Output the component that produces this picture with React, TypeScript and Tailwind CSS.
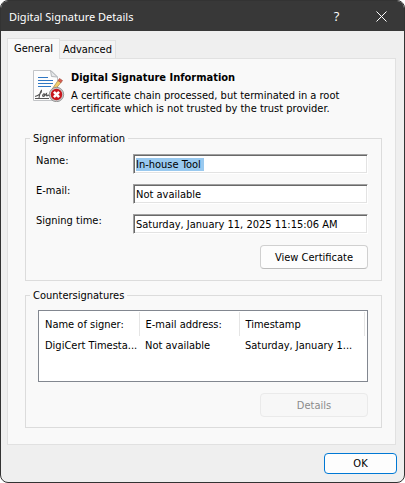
import { useEffect, useRef } from 'react';
import type { ReactNode, Ref } from 'react';

function SignatureIcon() {
  return (
    <svg className="h-8 w-8 shrink-0" viewBox="0 0 32 32" aria-hidden="true">
      <path d="M0.5 0.5H18L24.5 7V30.5H0.5Z" fill="#fdfdfd" stroke="#c2c4c7" />
      <path d="M17.5 0.5L18.500 6.500L24.5 7Z" fill="#e6e8ea" stroke="#b4b7ba" />
      <path d="M5 7.5H15M5 10.5H20M5 13.5H20M5 16.5H18" stroke="#2f77c4" />
      <path
        d="M2 26.500C6 25.500 9 22.500 8.500 20.500C7.500 21.500 6.500 25 6 28M9.500 26.500C9.500 24 11.500 23 11.500 24.500C11.500 26 10 26.500 10.500 26.500C12 26.500 12.500 24 13.500 23.500C13 26 14 26.500 15 25L17 26M2 28.500H16"
        fill="none"
        stroke="#555"
        strokeWidth="1.100"
      />
      <path d="M19.500 18.500L25 10.500L28 12.500L22.500 19Z" fill="#f1cd6b" stroke="#a8884a" strokeWidth="0.700" />
      <path d="M25 10.500L26.500 8.500L29.500 10.500L28 12.700Z" fill="#d9604f" stroke="#9d4a3f" strokeWidth="0.600" />
      <circle cx="23.500" cy="24.500" r="7.200" fill="#c9c9c9" stroke="#858585" strokeWidth="0.800" />
      <circle cx="23.500" cy="24.500" r="5.700" fill="#c8171d" />
      <path d="M20.900 21.900L26.100 27.100M26.100 21.900L20.900 27.100" stroke="#fff" strokeWidth="2.600" />
    </svg>
  );
}

function Group({ title, children }: { title: string; children: ReactNode }) {
  return (
    <fieldset className="min-w-0 border border-[#dcdcdc] pr-[13px] pb-2.5 pl-2.5">
      <legend className="-ml-1.5 px-[3px] leading-[13px]">{title}</legend>
      {children}
    </fieldset>
  );
}

type FieldProps = { id: string; label: string; value: string; inputRef?: Ref<HTMLInputElement> };

function Field({ id, label, value, inputRef }: FieldProps) {
  return (
    <div className="flex items-start">
      <label htmlFor={id} className="w-[97px] shrink-0">
        {label}
      </label>
      <input
        id={id}
        ref={inputRef}
        readOnly
        defaultValue={value}
        className="h-5 min-w-0 flex-1 border border-t-[#a0a0a0] border-r-white border-b-white border-l-[#a0a0a0] bg-white px-0.5 shadow-[inset_1px_1px_0_#696969,inset_-1px_-1px_0_#e3e3e3] outline-none selection:bg-[#99c9ef] selection:text-black"
      />
    </div>
  );
}

export default function App() {
  const nameRef = useRef<HTMLInputElement>(null);

  useEffect(() => {
    nameRef.current?.focus();
    nameRef.current?.select();
  }, []);

  return (
    <main className="flex min-h-screen flex-col overflow-hidden rounded-lg border border-[#333333] bg-[#efefef] font-['DejaVu_Sans_Condensed','DejaVu_Sans',sans-serif] text-[11px] leading-[13px] text-black">
      <header className="flex h-[30px] items-center bg-[#383838] pl-2 text-white">
        <h1 className="flex-1 font-['Noto_Sans',sans-serif]">Digital Signature Details</h1>
        <button type="button" aria-label="Help" className="flex h-full w-[45px] items-center justify-center font-['Open_Sans',sans-serif] text-[13px]">
          ?
        </button>
        <button type="button" aria-label="Close" className="flex h-full w-[45px] items-center justify-center">
          <svg className="h-[11px] w-[11px]" viewBox="0 0 11 11" fill="none" stroke="#fff" aria-hidden="true">
            <path d="M0.500 0.500L10.500 10.500M10.500 0.500L0.500 10.500" />
          </svg>
        </button>
      </header>

      <div className="pt-[7px] pr-2 pl-1.5">
        <div role="tablist" className="flex items-end">
          <button type="button" role="tab" aria-selected="true" className="relative -mb-px h-[21px] w-[53px] border border-b-0 border-[#e1e1e1] bg-[#f9f9f9] pb-0.5">
            General
          </button>
          <button type="button" role="tab" aria-selected="false" className="h-[18px] w-14 border border-b-0 border-l-0 border-[#e1e1e1] bg-[#f3f3f3]">
            Advanced
          </button>
        </div>

        <section role="tabpanel" className="border border-[#e1e1e1] bg-[#f9f9f9] pt-[11px] pr-[13px] pb-4 pl-[17px]">
          <div className="flex gap-1.5 pl-2">
            <SignatureIcon />
            <div className="pt-px">
              <h2 className="font-bold">Digital Signature Information</h2>
              <p className="mt-[5px]">
                A certificate chain processed, but terminated in a root
                <br />
                certificate which is not trusted by the trust provider.
              </p>
            </div>
          </div>

          <div className="mt-[17px] flex flex-col gap-2">
            <Group title="Signer information">
              <div className="mt-[9px] flex flex-col gap-2.5">
                <Field id="name" label="Name:" value="In-house Tool " inputRef={nameRef} />
                <Field id="email" label="E-mail:" value="Not available" />
                <Field id="time" label="Signing time:" value="Saturday, January 11, 2025 11:15:06 AM" />
              </div>
              <div className="mt-[11px] mb-px flex justify-end">
                <button type="button" className="h-6 w-[108px] rounded border border-[#d0d0d0] border-b-[#bcbcbc] bg-[#fdfdfd]">
                  View Certificate
                </button>
              </div>
            </Group>

            <Group title="Countersignatures">
              <div className="mt-2 ml-0.5 h-[72px] border border-[#828790] bg-white pt-px pr-0.5">
                <table className="w-full table-fixed text-left">
                  <colgroup>
                    <col className="w-[100px]" />
                    <col className="w-[100px]" />
                    <col />
                  </colgroup>
                  <thead>
                    <tr className="h-6">
                      <th className="border-r border-[#e5e5e5] pl-1.5 font-normal whitespace-nowrap">Name of signer:</th>
                      <th className="border-r border-[#e5e5e5] pl-1.5 font-normal whitespace-nowrap">E-mail address:</th>
                      <th className="border-r border-[#e5e5e5] pl-1.5 font-normal whitespace-nowrap">Timestamp</th>
                    </tr>
                  </thead>
                  <tbody>
                    <tr className="h-[18px]">
                      <td className="pl-1.5 whitespace-nowrap">DigiCert Timesta...</td>
                      <td className="pl-1.5 whitespace-nowrap">Not available</td>
                      <td className="pl-1.5 whitespace-nowrap">Saturday, January 1...</td>
                    </tr>
                  </tbody>
                </table>
              </div>
              <div className="mt-[11px] flex justify-end">
                <button type="button" disabled className="h-6 w-[108px] rounded border border-[#eaeaea] bg-[#f7f7f7] text-[#8b8b8b]">
                  Details
                </button>
              </div>
            </Group>
          </div>
        </section>

        <footer className="-mr-px flex justify-end py-2">
          <button type="button" className="h-[21px] w-[73px] rounded border border-[#0078d4] bg-[#fdfdfd]">
            OK
          </button>
        </footer>
      </div>
    </main>
  );
}
